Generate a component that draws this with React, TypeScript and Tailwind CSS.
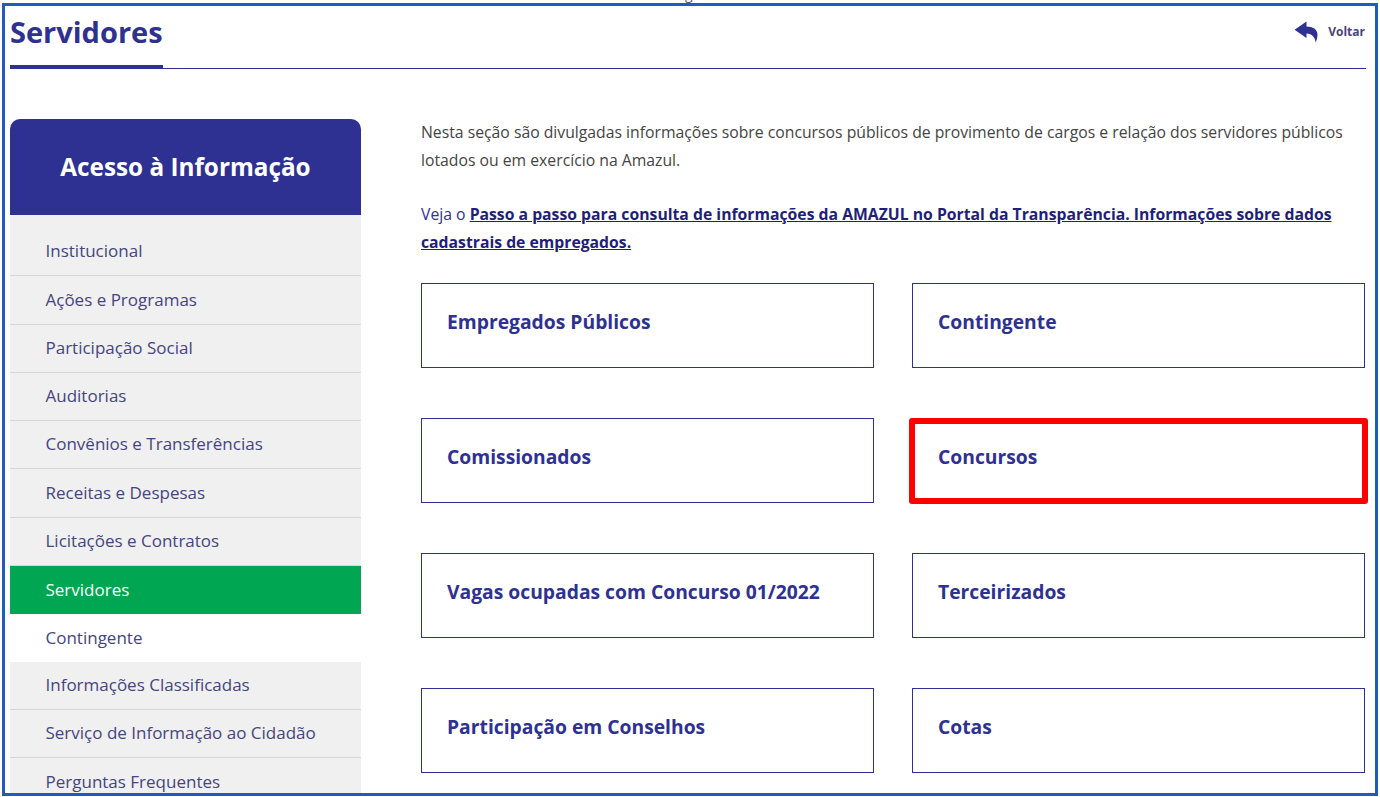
const menu = [
  "Institucional",
  "Ações e Programas",
  "Participação Social",
  "Auditorias",
  "Convênios e Transferências",
  "Receitas e Despesas",
  "Licitações e Contratos",
];

const menuBottom = ["Informações Classificadas", "Serviço de Informação ao Cidadão", "Perguntas Frequentes"];

const cards = [
  "Empregados Públicos",
  "Contingente",
  "Comissionados",
  "Concursos",
  "Vagas ocupadas com Concurso 01/2022",
  "Terceirizados",
  "Participação em Conselhos",
  "Cotas",
];

const App = () => {
  return (
    <div className="h-[797px] w-[1380px] overflow-hidden bg-white pl-[2px] font-['Open_Sans',sans-serif]">
      {/* descender of the text cut off above the frame */}
      <div className="h-[3px] overflow-hidden pl-[683px] text-[14px] leading-[14px] text-[#555a80]">
        <div className="-mt-[13px]">g</div>
      </div>
      <div className="h-[793px] w-[1376px] overflow-hidden border-[3px] border-[#1f5cbd] pl-[5px] pr-[9px]">
        {/* Header */}
        <div className="flex h-[63px] items-start justify-between border-b border-[#2e3192]">
          <h1 className="-mb-[1px] h-[63px] border-b-[4px] border-[#2e3192] pt-[6px] text-[29px] leading-[40px] font-bold text-[#2e3192]">
            Servidores
          </h1>
          <a className="mr-[1px] mt-[15px] flex items-center gap-[9px] text-[12px] font-bold text-[#45457f]">
            <svg width="25" height="22" viewBox="0 0 26 24" fill="#2e3192">
              <path d="M0 9.5 L13 0.5 V6 C20 6 25 9 25 15 C25 18 24 21 23 23.5 C22.5 18 19 13.5 13 13.5 V18.5 Z" />
            </svg>
            Voltar
          </a>
        </div>

        <div className="mt-[50px] flex">
          {/* Sidebar */}
          <aside className="w-[351px] shrink-0">
            <div className="flex h-[96px] items-center justify-center rounded-t-[10px] bg-[#2e3192] text-[24.3px] font-bold text-white">
              Acesso à Informação
            </div>
            <div className="h-[13px] bg-[#f0f0f0]" />
            {menu.map((item) => (
              <div key={item} className="flex h-[48.25px] items-center border-b border-[#d6d6d6] bg-[#f0f0f0] pb-[1px] pl-[35.5px] text-[17px] text-[#45457f]">
                {item}
              </div>
            ))}
            <div className="flex h-[48px] items-center bg-[#00a651] pb-[1px] pl-[35.5px] text-[17px] text-white">Servidores</div>
            <div className="flex h-[48px] items-center bg-white pb-[1px] pl-[35.5px] text-[17px] text-[#45457f]">Contingente</div>
            {menuBottom.map((item) => (
              <div key={item} className="flex h-[48.25px] items-center border-b border-[#d6d6d6] bg-[#f0f0f0] pb-[1px] pl-[35.5px] text-[17px] text-[#45457f]">
                {item}
              </div>
            ))}
          </aside>

          {/* Content */}
          <main className="ml-[60px] w-[944px]">
            <p className="text-[15.75px] leading-[27.5px] text-[#444444]">
              Nesta seção são divulgadas informações sobre concursos públicos de provimento de cargos e relação dos servidores públicos lotados ou em exercício na Amazul.
            </p>
            <p className="mt-[27px] text-[15.75px] leading-[27.5px] text-[#2e3192]">
              Veja o{" "}
              <a className="font-bold text-[#1f1f7a] underline">
                Passo a passo para consulta de informações da AMAZUL no Portal da Transparência. Informações sobre dados cadastrais de empregados.
              </a>
            </p>
            <div className="mt-[27px] grid grid-cols-[453px_453px] gap-x-[38px] gap-y-[50px]">
              {cards.map((card) =>
                card === "Concursos" ? (
                  <div key={card} className="-mx-[3px] -mb-[1px] flex h-[86px] items-center rounded-[3px] border-[6px] border-[#ff0000] pb-[8px] pl-[23px] text-[19.3px] font-bold text-[#2e3192]">
                    {card}
                  </div>
                ) : (
                  <div key={card} className="flex h-[85px] items-center border border-[#2e3192] pb-[6px] pl-[25px] text-[19.3px] font-bold text-[#2e3192]">
                    {card}
                  </div>
                )
              )}
            </div>
          </main>
        </div>
      </div>
    </div>
  );
};

export default App;
